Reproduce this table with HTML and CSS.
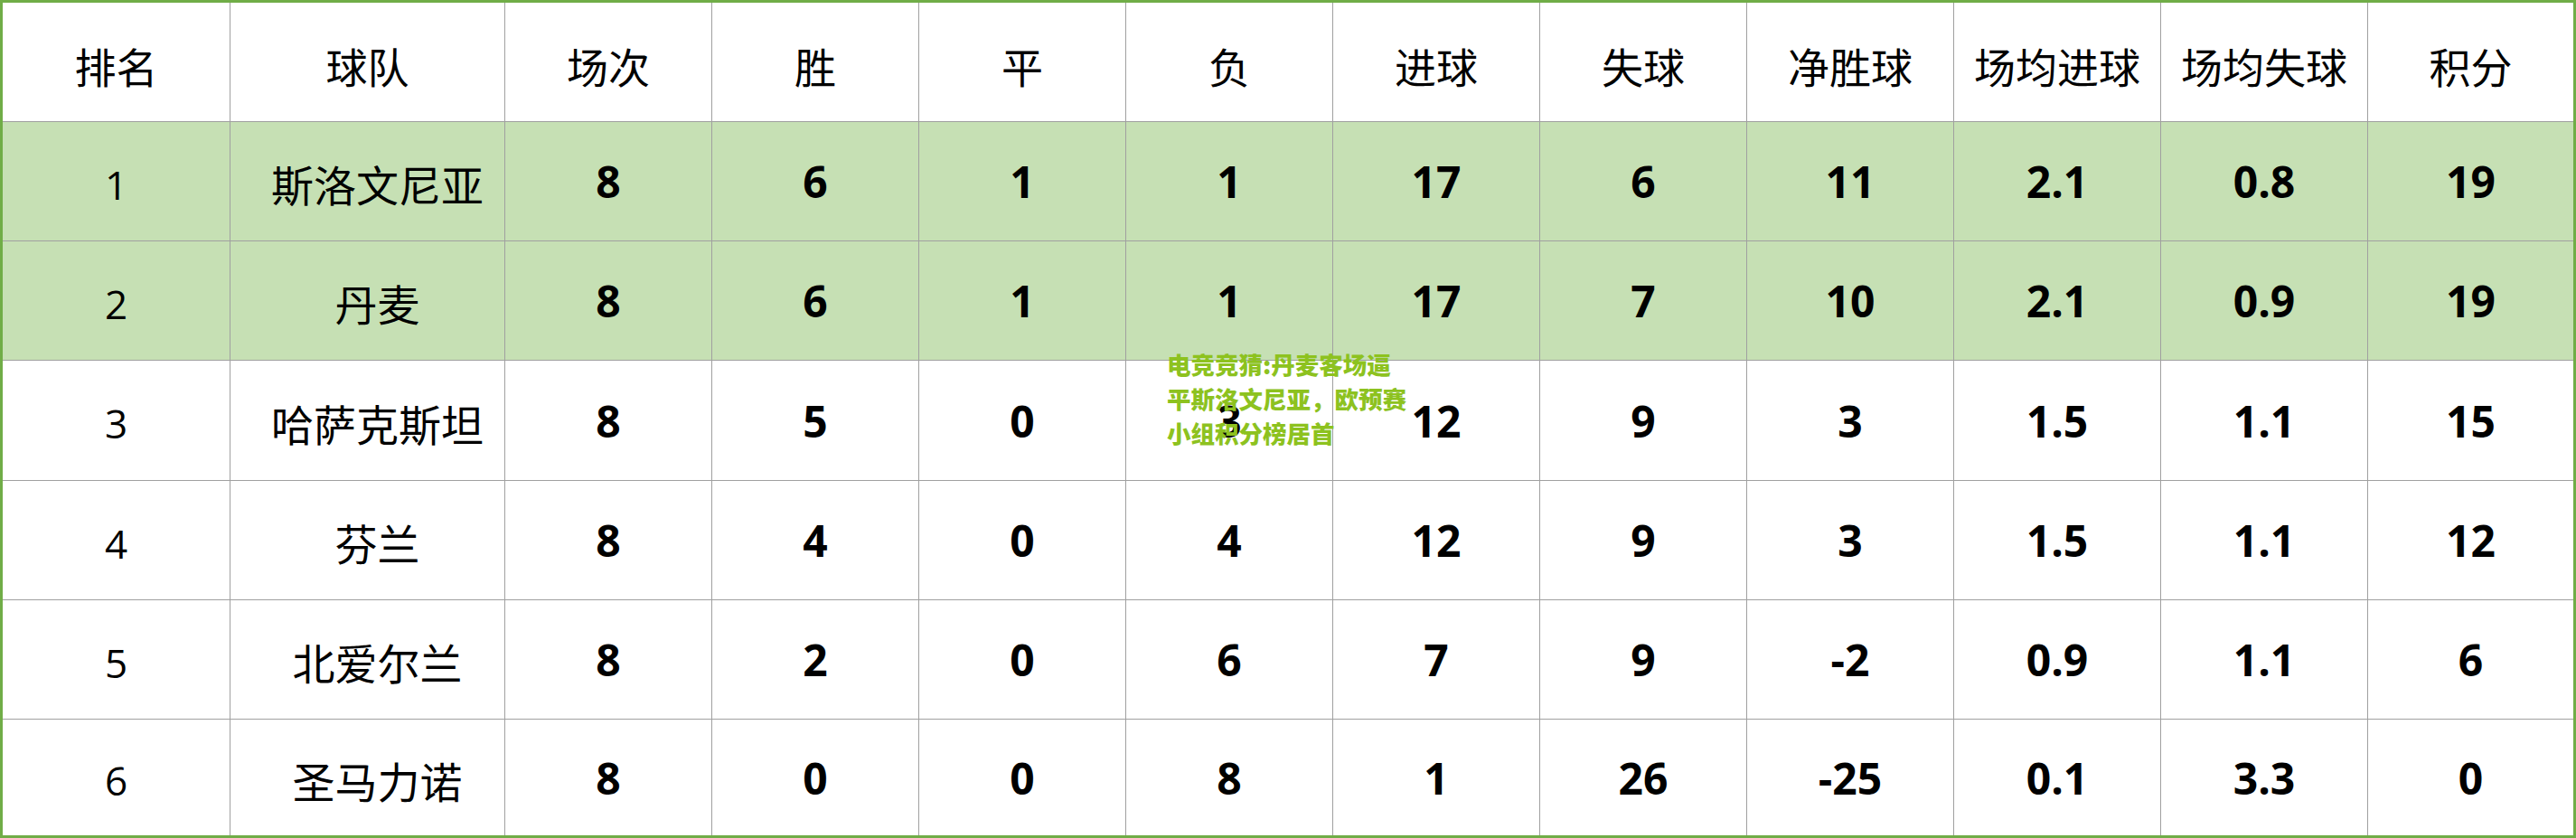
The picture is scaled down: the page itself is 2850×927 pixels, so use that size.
FILE: index.html
```html
<!DOCTYPE html>
<html lang="zh-CN">
<head>
<meta charset="utf-8">
<title>积分榜</title>
<link rel="stylesheet" href="styles.css">
</head>
<body>
<div class="board">
  <div class="grid">
    <div class="row head">
      <div class="cell">排名</div><div class="cell">球队</div><div class="cell">场次</div><div class="cell">胜</div><div class="cell">平</div><div class="cell">负</div><div class="cell">进球</div><div class="cell">失球</div><div class="cell">净胜球</div><div class="cell">场均进球</div><div class="cell">场均失球</div><div class="cell last">积分</div>
    </div>
    <div class="row hl">
      <div class="cell rank">1</div><div class="cell team">斯洛文尼亚</div><div class="cell num">8</div><div class="cell num">6</div><div class="cell num">1</div><div class="cell num">1</div><div class="cell num">17</div><div class="cell num">6</div><div class="cell num">11</div><div class="cell num">2.1</div><div class="cell num">0.8</div><div class="cell num last">19</div>
    </div>
    <div class="row hl">
      <div class="cell rank">2</div><div class="cell team">丹麦</div><div class="cell num">8</div><div class="cell num">6</div><div class="cell num">1</div><div class="cell num">1</div><div class="cell num">17</div><div class="cell num">7</div><div class="cell num">10</div><div class="cell num">2.1</div><div class="cell num">0.9</div><div class="cell num last">19</div>
    </div>
    <div class="row">
      <div class="cell rank">3</div><div class="cell team">哈萨克斯坦</div><div class="cell num">8</div><div class="cell num">5</div><div class="cell num">0</div><div class="cell num">3</div><div class="cell num">12</div><div class="cell num">9</div><div class="cell num">3</div><div class="cell num">1.5</div><div class="cell num">1.1</div><div class="cell num last">15</div>
    </div>
    <div class="row">
      <div class="cell rank">4</div><div class="cell team">芬兰</div><div class="cell num">8</div><div class="cell num">4</div><div class="cell num">0</div><div class="cell num">4</div><div class="cell num">12</div><div class="cell num">9</div><div class="cell num">3</div><div class="cell num">1.5</div><div class="cell num">1.1</div><div class="cell num last">12</div>
    </div>
    <div class="row">
      <div class="cell rank">5</div><div class="cell team">北爱尔兰</div><div class="cell num">8</div><div class="cell num">2</div><div class="cell num">0</div><div class="cell num">6</div><div class="cell num">7</div><div class="cell num">9</div><div class="cell num">-2</div><div class="cell num">0.9</div><div class="cell num">1.1</div><div class="cell num last">6</div>
    </div>
    <div class="row bottom">
      <div class="cell rank">6</div><div class="cell team">圣马力诺</div><div class="cell num">8</div><div class="cell num">0</div><div class="cell num">0</div><div class="cell num">8</div><div class="cell num">1</div><div class="cell num">26</div><div class="cell num">-25</div><div class="cell num">0.1</div><div class="cell num">3.3</div><div class="cell num last">0</div>
    </div>
  </div>
  <div class="caption">电竞竞猜:丹麦客场逼<br>平斯洛文尼亚，欧预赛<br>小组积分榜居首</div>
</div>
</body>
</html>
```

FILE: styles.css
```css
html, body {
  margin: 0;
  padding: 0;
  background: #ffffff;
}

.board {
  position: relative;
  width: 2850px;
  height: 927px;
  box-sizing: border-box;
  border: 3px solid #70ad47;
  background: #ffffff;
  overflow: hidden;
}

.grid {
  display: grid;
  grid-template-columns: 252px 304px repeat(9, 229px) 227px;
  grid-template-rows: 132px 132px 132px 133px 132px 132px 128px;
  width: 2844px;
  height: 921px;
}

.row {
  display: contents;
}

.cell {
  display: flex;
  align-items: center;
  justify-content: center;
  box-sizing: border-box;
  border-right: 1px solid #a0a0a0;
  border-bottom: 1px solid #a0a0a0;
  font-family: "Open Sans", "Noto Sans CJK SC", sans-serif;
  font-size: 46px;
  font-weight: 400;
  color: #000000;
  background: #ffffff;
  white-space: nowrap;
}

.cell.last {
  border-right: none;
}

.row.bottom .cell {
  border-bottom: none;
}

.row.head .cell {
  font-family: "Noto Sans CJK SC", sans-serif;
  padding-top: 6px;
}

.row.hl .cell {
  background: #c6e0b4;
}

.cell.team {
  font-family: "Noto Sans CJK SC", sans-serif;
  font-size: 47px;
  padding-left: 22px;
  padding-top: 4px;
}

.cell.rank {
  font-size: 44px;
  padding-top: 6px;
}

.cell.num {
  font-size: 48px;
  font-weight: 700;
}

.caption {
  position: absolute;
  left: 1288px;
  top: 381px;
  font-family: "Noto Sans CJK SC", sans-serif;
  font-size: 26.5px;
  line-height: 38px;
  font-weight: 900;
  color: #8dc21f;
  white-space: nowrap;
}
```
